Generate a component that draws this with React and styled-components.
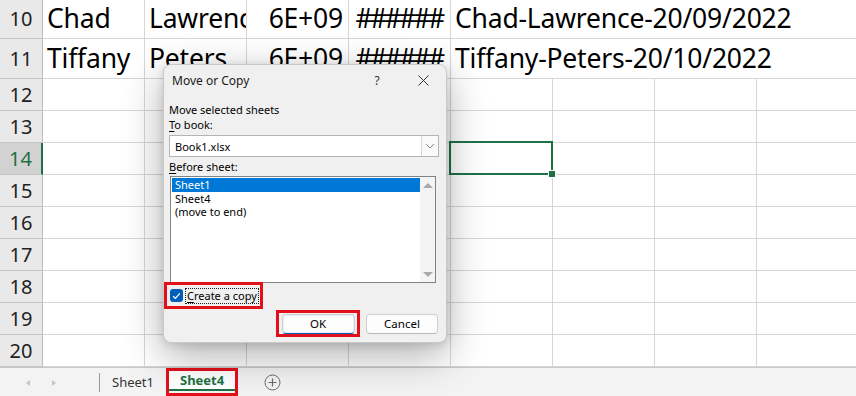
import React from "react";
import styled, { createGlobalStyle, css } from "styled-components";

const GlobalStyle = createGlobalStyle`
  html, body {
    margin: 0;
    padding: 0;
    background: #fff;
  }
  body {
    overflow: hidden;
  }
`;

const GREEN = "#1e7145";
const RED = "#e3101b";
const UI_FONT = `"Noto Sans", "Open Sans", sans-serif`;

const dataRows = [
  { num: 10, height: 39, cells: ["Chad", "Lawrence", "6E+09", "######", "Chad-Lawrence-20/09/2022"] },
  { num: 11, height: 40, cells: ["Tiffany", "Peters", "6E+09", "######", "Tiffany-Peters-20/10/2022"] },
];

const emptyRows = [12, 13, 14, 15, 16, 17, 18, 19, 20];

const Page = styled.div`
  width: 856px;
  height: 396px;
  position: relative;
  overflow: hidden;
  display: flex;
  flex-direction: column;
  font-family: ${UI_FONT};
`;

const Sheet = styled.div`
  flex: 1;
  display: flex;
  flex-direction: column;
  overflow: hidden;
`;

const Row = styled.div`
  display: grid;
  grid-template-columns: 43px repeat(8, 102px);
  height: ${(p) => p.$height}px;
  flex: none;
`;

const RowHead = styled.div`
  box-sizing: border-box;
  background: ${(p) => (p.$active ? "#d2d2d2" : "#e9e9e9")};
  color: ${(p) => (p.$active ? GREEN : "#222")};
  border-bottom: 1px solid #c4c4c4;
  border-right: ${(p) => (p.$active ? `2px solid ${GREEN}` : "1px solid #bdbdbd")};
  font-size: 20px;
  line-height: ${(p) => p.$height - 1}px;
  text-align: center;
`;

const Cell = styled.div`
  position: relative;
  box-sizing: border-box;
  border-right: 1px solid #d6d6d6;
  border-bottom: 1px solid #d6d6d6;
  overflow: hidden;
  white-space: nowrap;
  padding: 0 5px 0 4px;
  font-size: 26.5px;
  letter-spacing: ${(p) => (p.$fill ? "-2.6px" : "-0.2px")};
  color: #000;
  line-height: ${(p) => p.$height - 2}px;
  text-align: ${(p) => p.$align || "left"};
  grid-column: span ${(p) => p.$span || 1};
  ${(p) =>
    p.$selected &&
    css`
      overflow: visible;
      &::after {
        content: "";
        position: absolute;
        left: -2px;
        top: -2px;
        right: -1px;
        bottom: -1px;
        border: 2px solid ${GREEN};
        z-index: 2;
      }
      &::before {
        content: "";
        position: absolute;
        right: -4px;
        bottom: -4px;
        width: 6px;
        height: 6px;
        background: ${GREEN};
        border: 1px solid #fff;
        z-index: 3;
      }
    `}
`;

const TabBar = styled.div`
  height: 29px;
  flex: none;
  box-sizing: border-box;
  background: #f3f3f3;
  border-top: 1px solid #c8c8c8;
  display: flex;
  align-items: stretch;
  font-size: 13px;
`;

const NavArrows = styled.div`
  width: 100px;
  display: flex;
  align-items: center;
  padding-left: 26px;
  gap: 22px;
  box-sizing: border-box;
  border-right: 1px solid #9a9a9a;
  margin: 5px 0 4px;
`;

const Arrow = styled.span`
  width: 0;
  height: 0;
  border-top: 3px solid transparent;
  border-bottom: 3px solid transparent;
  ${(p) =>
    p.$dir === "left"
      ? css`border-right: 4px solid #c5c5c5;`
      : css`border-left: 4px solid #c5c5c5;`}
`;

const SheetTab = styled.div`
  display: flex;
  align-items: center;
  padding: 0 12px;
  color: #333;
  margin-bottom: 1px;
`;

const Highlight = styled.div`
  border: 3px solid ${RED};
  display: flex;
  box-sizing: border-box;
`;

const ActiveTab = styled.div`
  background: #fff;
  color: ${GREEN};
  font-weight: 700;
  padding: 0 11px;
  display: flex;
  align-items: center;
  border-bottom: 2px solid ${GREEN};
  margin-bottom: 2px;
`;

const AddSheet = styled.div`
  margin-left: 26px;
  display: flex;
  align-items: center;
  color: #666;
`;

/* dialog */

const Dialog = styled.div`
  position: absolute;
  left: 163px;
  top: 64px;
  width: 284px;
  height: 279px;
  box-sizing: border-box;
  background: #f0f0f0;
  border: 1px solid #c9c9c9;
  border-radius: 8px;
  box-shadow: 0 12px 40px rgba(0, 0, 0, 0.32), 0 2px 8px rgba(0, 0, 0, 0.12);
  display: flex;
  flex-direction: column;
  font-size: 11px;
  color: #000;
  z-index: 5;
`;

const TitleBar = styled.div`
  height: 31px;
  display: flex;
  align-items: center;
  padding-left: 8px;
  font-size: 12px;
  color: #1a1a1a;
`;

const Title = styled.div`
  flex: 1;
`;

const TitleButton = styled.div`
  width: 46px;
  height: 31px;
  display: flex;
  align-items: center;
  justify-content: center;
  font-size: 12px;
  color: #333;
`;

const Body = styled.div`
  padding: 6px 7px 0 5px;
  display: flex;
  flex-direction: column;
`;

const Label = styled.div`
  line-height: 15px;
  margin-bottom: ${(p) => p.$gap || 0}px;
`;

const U = styled.span`
  text-decoration: underline;
  text-underline-offset: 2px;
`;

const Combo = styled.div`
  height: 22px;
  box-sizing: border-box;
  border: 1px solid #b5b5b5;
  background: #fff;
  display: flex;
  align-items: center;
  margin-bottom: 2px;
`;

const ComboText = styled.div`
  flex: 1;
  padding-left: 5px;
`;

const ComboButton = styled.div`
  width: 17px;
  height: 20px;
  box-sizing: border-box;
  border-left: 1px solid #d6d6d6;
  background: #fafafa;
  display: flex;
  align-items: center;
  justify-content: center;
`;

const ListBox = styled.div`
  height: 107px;
  margin-left: 1px;
  margin-right: 3px;
  box-sizing: border-box;
  border: 1px solid #828282;
  background: #fff;
  display: flex;
`;

const ListItems = styled.div`
  flex: 1;
  padding: 1px 0 0 1px;
`;

const ListItem = styled.div`
  height: 13.5px;
  line-height: 13.5px;
  padding-left: 3px;
  background: ${(p) => (p.$selected ? "#0078d7" : "transparent")};
  color: ${(p) => (p.$selected ? "#fff" : "#000")};
`;

const ScrollTrack = styled.div`
  width: 15px;
  background: #f4f4f4;
  display: flex;
  flex-direction: column;
  justify-content: space-between;
  align-items: center;
  padding: 6px 0 5px;
`;

const ScrollArrow = styled.span`
  width: 0;
  height: 0;
  border-left: 5px solid transparent;
  border-right: 5px solid transparent;
  ${(p) =>
    p.$dir === "up"
      ? css`border-bottom: 5px solid #a9a9a9;`
      : css`border-top: 5px solid #a9a9a9;`}
`;

const CheckHighlight = styled(Highlight)`
  width: 99px;
  height: 27px;
  margin: -1px 0 0 -5px;
  align-items: center;
  padding-left: 3px;
  gap: 2px;
  white-space: nowrap;
`;

const CheckBox = styled.div`
  width: 13px;
  height: 13px;
  flex: none;
  border-radius: 3px;
  background: #005fb8;
  display: flex;
  align-items: center;
  justify-content: center;
`;

const FocusLabel = styled.div`
  border: 1px dotted #222;
  padding: 0 1px;
  line-height: 14px;
`;

const ButtonRow = styled.div`
  display: flex;
  justify-content: flex-end;
  align-items: center;
  gap: 6px;
  margin-top: 1px;
  padding-right: 1px;
`;

const OkHighlight = styled(Highlight)`
  width: 84px;
  height: 27px;
  align-items: center;
  justify-content: center;
`;

const Button = styled.div`
  width: ${(p) => p.$width}px;
  height: 20px;
  box-sizing: border-box;
  background: #fdfdfd;
  border: 1px solid ${(p) => (p.$primary ? "#cfcfcf" : "#d0d0d0")};
  border-bottom-color: ${(p) => (p.$primary ? "#005fb8" : "#b8b8b8")};
  border-radius: 4px;
  display: flex;
  align-items: center;
  justify-content: center;
  font-size: 11.5px;
  ${(p) =>
    p.$primary &&
    css`
      box-shadow: inset 0 0 0 1px #e8eef6;
    `}
`;

const Chevron = () => (
  <svg width="10" height="6" viewBox="0 0 10 6">
    <path d="M1 1l4 4 4-4" fill="none" stroke="#8a8a8a" strokeWidth="1" />
  </svg>
);

const Check = () => (
  <svg width="9" height="8" viewBox="0 0 9 8">
    <path d="M1.2 4.2l2.2 2.2 4.4-5" fill="none" stroke="#fff" strokeWidth="1.3" />
  </svg>
);

const CloseIcon = () => (
  <svg width="11" height="11" viewBox="0 0 11 11">
    <path d="M0.5 0.5l10 10M10.5 0.5l-10 10" stroke="#333" strokeWidth="1" />
  </svg>
);

const PlusCircle = () => (
  <svg width="17" height="17" viewBox="0 0 17 17">
    <circle cx="8.5" cy="8.5" r="7.5" fill="none" stroke="#6b6b6b" strokeWidth="1" />
    <path d="M8.5 4.5v8M4.5 8.5h8" stroke="#6b6b6b" strokeWidth="1.2" />
  </svg>
);

const MoveOrCopy = () => (
  <Dialog>
    <TitleBar>
      <Title>Move or Copy</Title>
      <TitleButton>?</TitleButton>
      <TitleButton>
        <CloseIcon />
      </TitleButton>
    </TitleBar>
    <Body>
      <Label>Move selected sheets</Label>
      <Label $gap={3}>
        <U>T</U>o book:
      </Label>
      <Combo>
        <ComboText>Book1.xlsx</ComboText>
        <ComboButton>
          <Chevron />
        </ComboButton>
      </Combo>
      <Label $gap={2}>
        <U>B</U>efore sheet:
      </Label>
      <ListBox>
        <ListItems>
          <ListItem $selected>Sheet1</ListItem>
          <ListItem>Sheet4</ListItem>
          <ListItem>(move to end)</ListItem>
        </ListItems>
        <ScrollTrack>
          <ScrollArrow $dir="up" />
          <ScrollArrow $dir="down" />
        </ScrollTrack>
      </ListBox>
      <CheckHighlight>
        <CheckBox>
          <Check />
        </CheckBox>
        <FocusLabel>
          <U>C</U>reate a copy
        </FocusLabel>
      </CheckHighlight>
      <ButtonRow>
        <OkHighlight>
          <Button $primary $width={73}>OK</Button>
        </OkHighlight>
        <Button $width={72}>Cancel</Button>
      </ButtonRow>
    </Body>
  </Dialog>
);

export default function App() {
  return (
    <Page>
      <GlobalStyle />
      <Sheet>
        {dataRows.map((row) => (
          <Row key={row.num} $height={row.height}>
            <RowHead $height={row.height}>{row.num}</RowHead>
            <Cell $height={row.height}>{row.cells[0]}</Cell>
            <Cell $height={row.height}>{row.cells[1]}</Cell>
            <Cell $height={row.height} $align="right">{row.cells[2]}</Cell>
            <Cell $height={row.height} $align="center" $fill>{row.cells[3]}</Cell>
            <Cell $height={row.height} $span={4}>{row.cells[4]}</Cell>
          </Row>
        ))}
        {emptyRows.map((num) => (
          <Row key={num} $height={32}>
            <RowHead $height={32} $active={num === 14}>{num}</RowHead>
            {Array.from({ length: 8 }).map((_, i) => (
              <Cell key={i} $height={32} $selected={num === 14 && i === 4} />
            ))}
          </Row>
        ))}
      </Sheet>
      <TabBar>
        <NavArrows>
          <Arrow $dir="left" />
          <Arrow $dir="right" />
        </NavArrows>
        <SheetTab>Sheet1</SheetTab>
        <Highlight>
          <ActiveTab>Sheet4</ActiveTab>
        </Highlight>
        <AddSheet>
          <PlusCircle />
        </AddSheet>
      </TabBar>
      <MoveOrCopy />
    </Page>
  );
}
